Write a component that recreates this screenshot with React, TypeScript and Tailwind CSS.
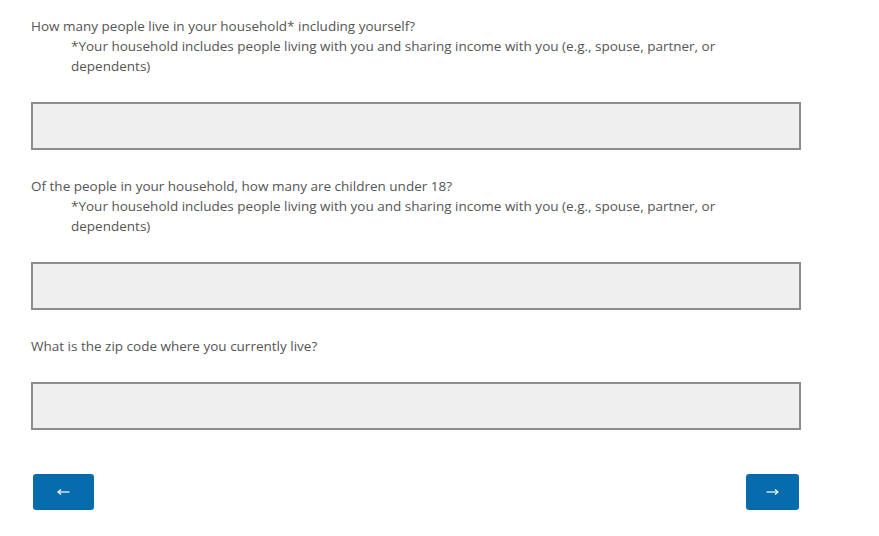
const questions = [
  {
    label: "How many people live in your household* including yourself?",
    note: true,
  },
  {
    label: "Of the people in your household, how many are children under 18?",
    note: true,
  },
  {
    label: "What is the zip code where you currently live?",
    note: false,
  },
];

function Arrow({ left }: { left?: boolean }) {
  return (
    <svg
      width="13"
      height="8"
      viewBox="0 0 13 8"
      fill="none"
      stroke="white"
      strokeWidth="1.2"
      className={left ? "rotate-180" : ""}
    >
      <path d="M0.5 4H12" />
      <path d="M9 1.5L12 4L9 6.5" />
    </svg>
  );
}

export default function App() {
  return (
    <div
      className="min-h-screen bg-white pl-[31px] pr-[78px] pt-4 text-[13.5px] leading-5 text-[#555555]"
      style={{ fontFamily: '"Open Sans", "Liberation Sans", sans-serif' }}
    >
      <div className="w-[770px]">
        {questions.map((q) => (
          <div key={q.label} className="mb-[26px]">
            <label className="block">{q.label}</label>
            {q.note && (
              <p className="ml-10 w-[690px]">
                *Your household includes people living with you and sharing
                income with you (e.g., spouse, partner, or dependents)
              </p>
            )}
            <input
              type="text"
              className="mt-[26px] block h-12 w-full border-2 border-[#8c8c8c] bg-[#efefef] px-3 outline-none"
            />
          </div>
        ))}

        <div className="mt-[44px] flex items-center justify-between px-[2px]">
          <button className="flex h-9 w-[61px] items-center justify-center rounded-[3px] bg-[#076cad]">
            <Arrow left />
          </button>
          <button className="flex h-9 w-[53px] items-center justify-center rounded-[3px] bg-[#076cad]">
            <Arrow />
          </button>
        </div>
      </div>
    </div>
  );
}
